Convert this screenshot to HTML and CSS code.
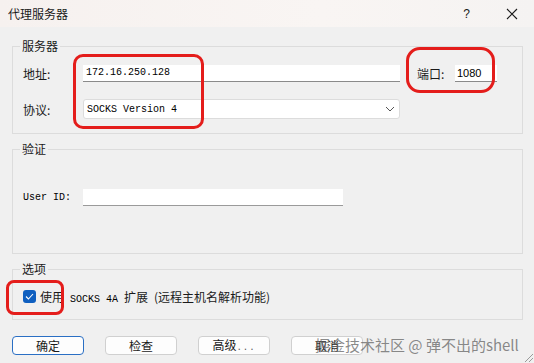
FILE: index.html
```html
<!DOCTYPE html>
<html lang="zh-CN">
<head>
    <meta charset="UTF-8">
    <meta name="viewport" content="width=device-width, initial-scale=1.0">
    <title>代理服务器</title>
    <link rel="stylesheet" href="styles.css">
</head>
<body>
    <div class="window">
        <!-- Title bar -->
        <div class="titlebar">
            <span class="title">代理服务器</span>
            <div class="title-buttons">
                <span class="help">?</span>
                <svg class="close" width="12" height="12" viewBox="0 0 12 12">
                    <path d="M1 1 L11 11 M11 1 L1 11" stroke="#1a1a1a" stroke-width="1.1" fill="none"/>
                </svg>
            </div>
        </div>

        <div class="content">
            <fieldset class="group group-server">
                <legend>服务器</legend>
                <div class="row row-host">
                    <span class="label">地址:</span>
                    <div class="field field-host">172.16.250.128</div>
                    <span class="label-port">端口:</span>
                    <div class="field field-port">1080</div>
                </div>
                <div class="row row-proto">
                    <span class="label">协议:</span>
                    <div class="select">
                        <span>SOCKS Version 4</span>
                        <svg width="10" height="6" viewBox="0 0 10 6">
                            <path d="M1 1 L5 5 L9 1" stroke="#555" stroke-width="1" fill="none"/>
                        </svg>
                    </div>
                </div>
            </fieldset>

            <fieldset class="group group-auth">
                <legend>验证</legend>
                <div class="row row-user">
                    <span class="label mono">User ID:</span>
                    <div class="field field-user"></div>
                </div>
            </fieldset>

            <fieldset class="group group-options">
                <legend>选项</legend>
                <div class="row row-check">
                    <span class="checkbox">
                        <svg width="9" height="7" viewBox="0 0 9 7">
                            <path d="M1 3.5 L3.4 6 L8 1" stroke="#fff" stroke-width="1.1" fill="none"/>
                        </svg>
                    </span>
                    <span class="check-text">使用<span class="mono"> SOCKS 4A </span>扩展<span class="mono"> </span>(远程主机名解析功能)</span>
                </div>
            </fieldset>

            <div class="buttons">
                <button class="btn btn-default">确定</button>
                <button class="btn">检查</button>
                <button class="btn">高级<span class="dots">...</span></button>
                <button class="btn">取消</button>
            </div>
        </div>

        <!-- Red annotation marks -->
        <div class="mark mark-host"></div>
        <div class="mark mark-port"></div>
        <div class="mark mark-check"></div>

        <div class="watermark">掘金技术社区 @ 弹不出的shell</div>

        <svg class="grip" width="9" height="9" viewBox="0 0 9 9">
            <path d="M9 1 L1 9 M9 5 L5 9" stroke="#9a9a9a" stroke-width="1" fill="none"/>
        </svg>
    </div>
</body>
</html>
```

FILE: styles.css
```css
/* Window frame */
body {
    margin: 0;
    padding: 0;
    background: #f0f0f0;
    font-family: "Noto Sans CJK SC", "Liberation Sans", sans-serif;
    font-size: 12px;
    color: #1a1a1a;
}

.window {
    position: relative;
    width: 534px;
    height: 363px;
    overflow: hidden;
    background: #f0f0f0;
}

/* Title bar */
.titlebar {
    height: 27px;
    display: flex;
    align-items: center;
    justify-content: space-between;
    padding: 0 16px 0 8px;
    background: linear-gradient(to right, #f6f1ef, #f9f5f3 60%, #f5f3f2);
}

.title {
    font-size: 12px;
    line-height: 16px;
}

.title-buttons {
    display: flex;
    align-items: center;
    gap: 36px;
}

.help {
    font-family: "Liberation Sans", sans-serif;
    font-size: 12px;
}

/* Content */
.content {
    display: flex;
    flex-direction: column;
    gap: 7px;
    padding: 11px 11px 0 12px;
}

.group {
    box-sizing: border-box;
    margin: 0;
    padding: 0 0 0 10px;
    border: 1px solid #dcdcdc;
    min-width: 0;
}

.group legend {
    margin-left: -3px;
    padding: 0 2px;
    font-size: 12px;
    line-height: 16px;
}

.group-server {
    height: 96px;
}

.group-auth {
    height: 113px;
}

.group-options {
    height: 59px;
}

.mono {
    font-family: "Liberation Mono", "Noto Sans CJK SC", monospace;
    font-size: 10px;
    color: #000;
}

/* Rows */
.row {
    display: flex;
    align-items: center;
}

.label {
    width: 60px;
    flex: none;
}

.row-host {
    margin-top: 11px;
    height: 17px;
}

.row-proto {
    margin-top: 17px;
    height: 20px;
}

.row-user {
    margin-top: 32px;
    height: 17px;
}

.row-check {
    margin-top: 12px;
    height: 14px;
}

/* Text inputs */
.field {
    box-sizing: border-box;
    height: 17px;
    background: #fff;
    border-bottom: 1px solid #8a8a8a;
    font-family: "Liberation Mono", monospace;
    font-size: 10px;
    line-height: 16px;
    padding-left: 3px;
    color: #000;
}

.field-host {
    width: 317px;
}

.label-port {
    margin-left: 17px;
    width: 38px;
}

.field-port {
    width: 42px;
    font-family: "Liberation Sans", sans-serif;
    font-size: 11px;
    padding-left: 2px;
}

.field-user {
    width: 260px;
    border-bottom-color: #9a9a9a;
}

/* Dropdown */
.select {
    box-sizing: border-box;
    width: 317px;
    height: 20px;
    background: #fff;
    border: 1px solid #dcdcdc;
    border-radius: 3px;
    display: flex;
    align-items: center;
    justify-content: space-between;
    padding: 0 4px 0 3px;
    font-family: "Liberation Mono", monospace;
    font-size: 10px;
    color: #000;
}

/* Checkbox */
.checkbox {
    width: 13px;
    height: 13px;
    border-radius: 3px;
    background: #0f5fc0;
    display: flex;
    align-items: center;
    justify-content: center;
    flex: none;
}

.check-text {
    margin-left: 4px;
    font-size: 12px;
}

/* Buttons */
.buttons {
    display: flex;
    gap: 21px;
    margin-top: 9px;
}

.btn {
    box-sizing: border-box;
    width: 72px;
    height: 19px;
    padding: 0;
    background: #fdfdfd;
    border: 1px solid #d0d0d0;
    border-radius: 4px;
    font-family: "Noto Sans CJK SC", sans-serif;
    font-size: 12px;
    line-height: 16px;
    color: #1a1a1a;
}

.btn-default {
    border-color: #2a6fc4;
}

.dots {
    font-family: "Liberation Mono", monospace;
    font-size: 9px;
    letter-spacing: 1px;
    color: #555;
}

/* Annotations laid over the dialog */
.mark {
    position: absolute;
    box-sizing: border-box;
    border: 3px solid #e41d1b;
    border-radius: 10px;
}

.mark-host {
    left: 73px;
    top: 54px;
    width: 131px;
    height: 75px;
}

.mark-port {
    left: 406px;
    top: 47px;
    width: 89px;
    height: 46px;
    border-radius: 14px;
}

.mark-check {
    left: 6px;
    top: 280px;
    width: 58px;
    height: 35px;
    border-radius: 8px;
}

.watermark {
    position: absolute;
    left: 315px;
    top: 335px;
    font-size: 15px;
    line-height: 20px;
    color: rgba(100, 100, 100, 0.75);
    white-space: nowrap;
}

.grip {
    position: absolute;
    right: 1px;
    bottom: 1px;
}
```
